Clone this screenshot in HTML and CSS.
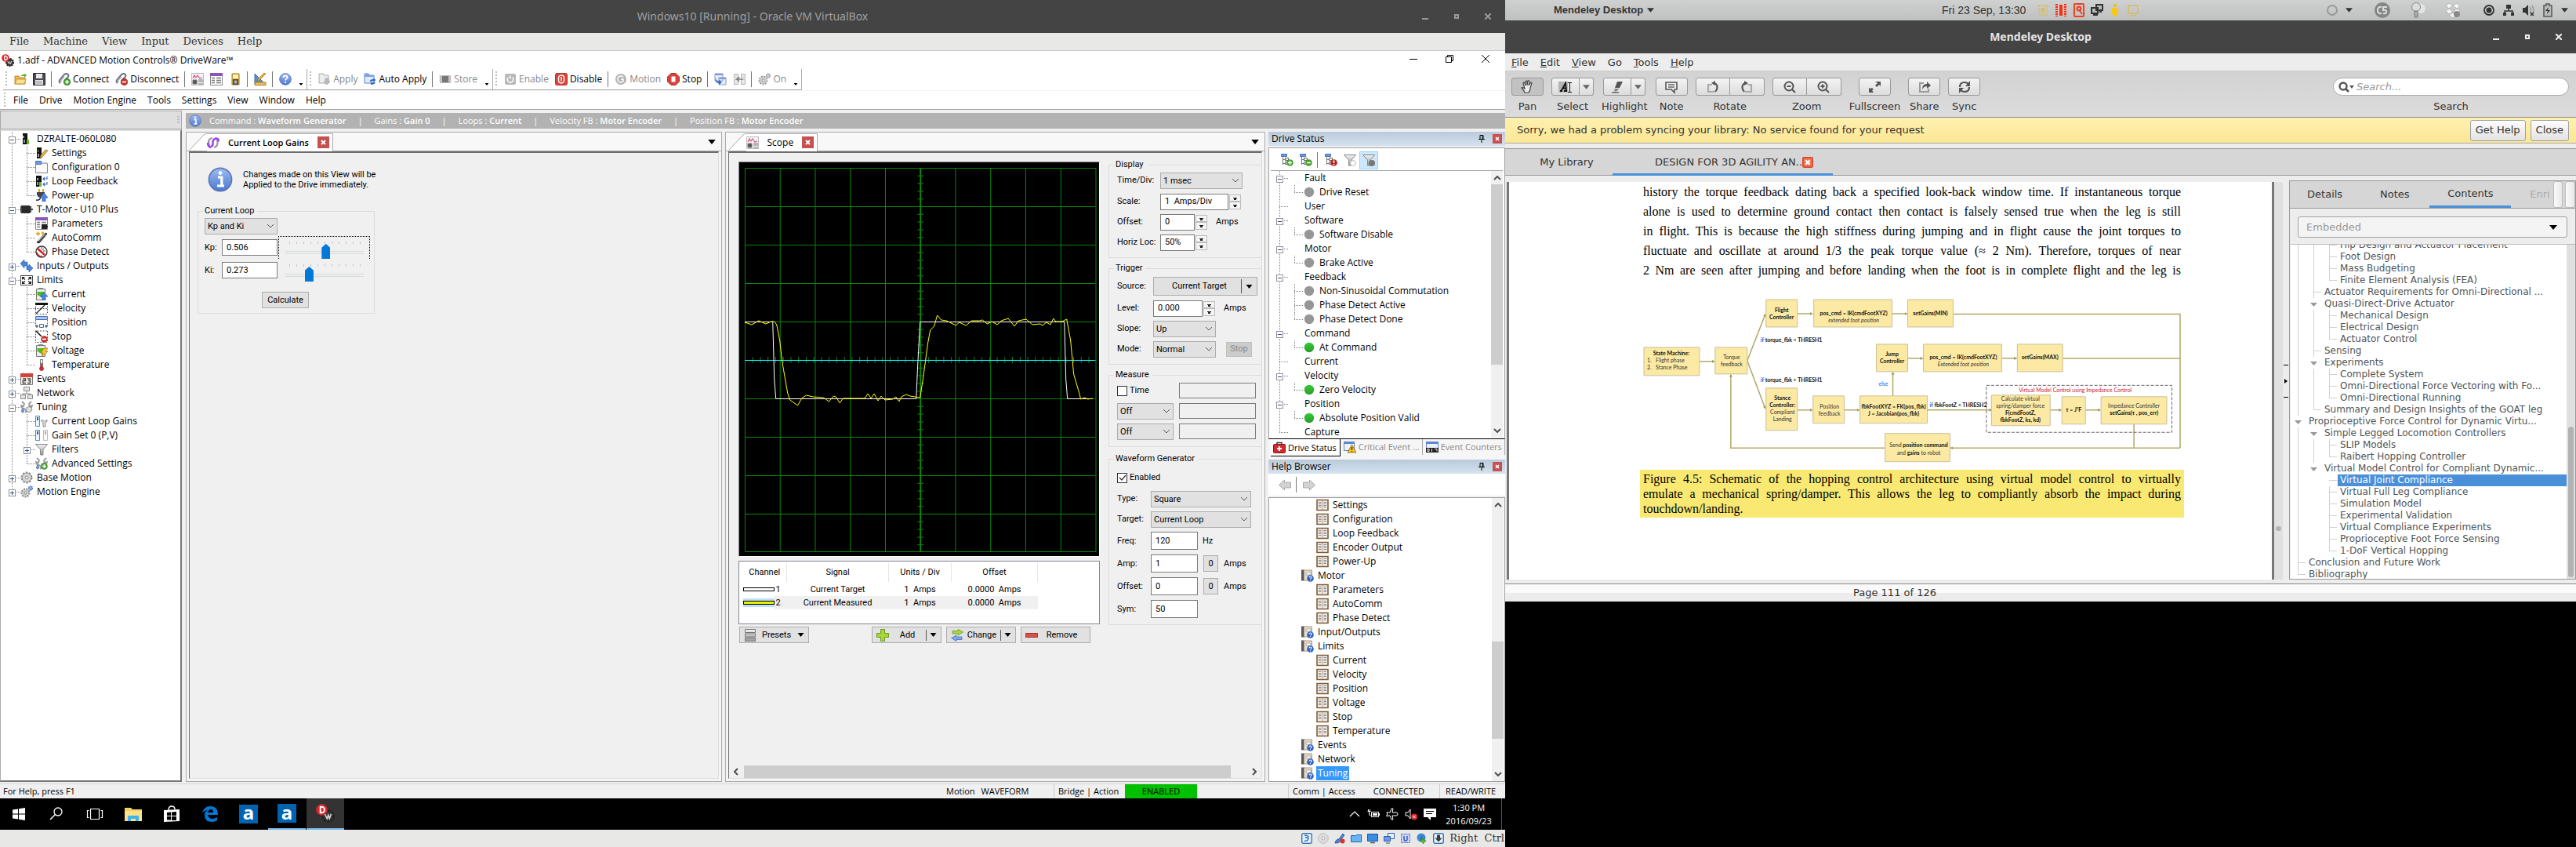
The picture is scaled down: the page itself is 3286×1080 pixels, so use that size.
FILE: index.html
```html
<!DOCTYPE html>
<html lang="en">
<head>
<meta charset="utf-8">
<title>Desktop</title>
<link rel="stylesheet" href="styles.css">
</head>
<body>
<svg class="defs" aria-hidden="true">
<defs>
<linearGradient id="gb" x1="0" y1="0" x2="0" y2="1"><stop offset="0" stop-color="#9dbcf0"/><stop offset="1" stop-color="#4a78d0"/></linearGradient>
<linearGradient id="gn" x1="0" y1="0" x2="0" y2="1"><stop offset="0" stop-color="#34cc34"/><stop offset="1" stop-color="#2c9a2c"/></linearGradient>
<linearGradient id="gg" x1="0" y1="0" x2="0" y2="1"><stop offset="0" stop-color="#f4f4f4"/><stop offset="1" stop-color="#9a9a9a"/></linearGradient>
<symbol id="open" viewBox="0 0 16 16"><path d="M1 4h5l1 2h7v8H1z" fill="#f0b94a" stroke="#b98a2d"/><path d="M3 8h12l-2 6H1z" fill="#fbe08f" stroke="#c89532"/><path d="M8 4q4-3 6-2l-1-2 3 3-3 3v-2q-3 0-5 0z" fill="#5fa834"/></symbol>
<symbol id="save" viewBox="0 0 16 16"><path d="M.5.5h15v15h-15z" fill="#4c4c50" stroke="#2b2b2e"/><path d="M4 1h8v6H4zM3 9h10v6H3z" fill="#e8e8ec"/><path d="M4 11h8M4 13h8" stroke="#999"/></symbol>
<symbol id="link" viewBox="0 0 16 16"><path d="M3 13q-3-2 0-5l5-6q3-2 5 0 1 2-1 4l-4 4" fill="none" stroke="#6c7480" stroke-width="2"/><path d="M4 12q-1-2 1-4l3-3" fill="none" stroke="#b0b6c0" stroke-width="1.5"/></symbol>
<symbol id="connect" viewBox="0 0 16 16"><use href="#link"/><circle cx="11.500" cy="11.500" r="4.300" fill="#43a02b" stroke="#2a6e1a" stroke-width=".6"/><path d="M11.500 9v5M9 11.500h5" stroke="#fff" stroke-width="1.600"/></symbol>
<symbol id="disconnect" viewBox="0 0 16 16"><use href="#link"/><circle cx="11.500" cy="11.500" r="4.300" fill="#c9302c" stroke="#8a1c1a" stroke-width=".6"/><path d="M9 11.500h5" stroke="#fff" stroke-width="1.800"/></symbol>
<symbol id="scope" viewBox="0 0 16 16"><path d="M.5.5h15v15h-15z" fill="#f4f4f8" stroke="#bbb"/><path d="M2 7l2-4 2 3 2-3 3 4 3-1" fill="none" stroke="#e0507a" stroke-width="1.200"/><path d="M2 9h5v5H2zM9 9h6M9 11h6M9 14h6" fill="#555" stroke="#777"/></symbol>
<symbol id="list" viewBox="0 0 16 16"><path d="M.5.5h15v15h-15z" fill="#fff" stroke="#888"/><path d="M0 0h16v4H0z" fill="#8a55b8"/><path d="M2 6.500h4M2 9.500h4M2 12.500h4M8 6.500h6M8 9.500h6M8 12.500h6" stroke="#777" stroke-width="1.400"/></symbol>
<symbol id="meter" viewBox="0 0 16 16"><path d="M4 1h9v14H4z" fill="#e8b640" stroke="#a07820"/><path d="M5 2h7v5H5z" fill="#fff3c4"/><path d="M5 8h7v7H5z" fill="#4a4a4a"/><circle cx="8.500" cy="11.500" r="2.200" fill="#aaa"/></symbol>
<symbol id="ruler" viewBox="0 0 16 16"><path d="M1 1l13 13H1z" fill="#5f8ed0" stroke="#3c68a8"/><path d="M1 12h14v3.500H1z" fill="#f0c05a" stroke="#a87a20"/><path d="M15 1l-9 9-2 1 1-3 8-8z" fill="#f5b838" stroke="#8a6a20" stroke-width=".8"/></symbol>
<symbol id="help" viewBox="0 0 16 16"><circle cx="8" cy="8" r="7.300" fill="url(#gb)" stroke="#5a76b8"/><path d="M5.500 6q.2-2.500 2.500-2.500t2.500 2.200q0 1.300-1.500 2-1 .6-1 1.800M8 11v2" fill="none" stroke="#fff" stroke-width="1.800"/></symbol>
<symbol id="info" viewBox="0 0 16 16"><circle cx="8" cy="8" r="7.300" fill="url(#gb)" stroke="#5a76b8" stroke-width=".8"/><path d="M6.500 6.500h2.400v5M6 12h4.500" fill="none" stroke="#fff" stroke-width="1.600"/><circle cx="8" cy="3.800" r="1.200" fill="#fff"/></symbol>
<symbol id="apply" viewBox="0 0 16 16"><path d="M1 1h5l1 2h6v10H1z" fill="#eee" stroke="#aaa"/><path d="M9 7h4v4h2l-4 4-4-4h2z" fill="#bbb" stroke="#999" stroke-width=".6"/></symbol>
<symbol id="autoapply" viewBox="0 0 16 16"><path d="M1 1h5l1 2h6v10H1z" fill="#dfe9fa" stroke="#5b84cc"/><path d="M1 1h5l1 2h6v2H1z" fill="#7ea4e4"/><path d="M7.500 11q1-3 4-3h1V6.500l3 2.500-3 2.500V10q-2 0-2.500 1zM15 12q-1 3-4 2.500v1.500l-2.500-2.500L11 11v1.500z" fill="#2d68d0"/></symbol>
<symbol id="store" viewBox="0 0 16 16"><path d="M1 3h14v10H1z" fill="#bbb"/><path d="M4 4h8v8H4z" fill="#777"/><path d="M0 4h4M0 7h4M0 10h4M12 4h4M12 7h4M12 10h4" stroke="#ccc"/></symbol>
<symbol id="enable" viewBox="0 0 16 16"><rect x="1" y="1" width="14" height="14" rx="2" fill="#b8b8b8"/><path d="M5.500 5.500a3.800 3.800 0 1 0 5 0M8 3.500v4" fill="none" stroke="#fff" stroke-width="1.500"/></symbol>
<symbol id="disable" viewBox="0 0 16 16"><rect x=".5" y=".5" width="15" height="15" rx="2" fill="#d8443c" stroke="#a8322c"/><path d="M8 5v5.500" stroke="#fff" stroke-width="1.500"/><rect x="4.500" y="3" width="7" height="10" rx="3.400" fill="none" stroke="#fff" stroke-width="1.400"/></symbol>
<symbol id="motion" viewBox="0 0 16 16"><circle cx="8" cy="8" r="7" fill="#b4b4b4"/><path d="M11 5.500a4 4 0 1 0 0 5V8H8" fill="none" stroke="#fff" stroke-width="1.500"/></symbol>
<symbol id="stop" viewBox="0 0 16 16"><path d="M5 .5h6L15.500 5v6L11 15.500H5L.5 11V5z" fill="#d8443c" stroke="#b03028"/><path d="M5.500 4.500h5v7h-5z" fill="#fff"/></symbol>
<symbol id="copywin" viewBox="0 0 16 16"><path d="M1 1h10v9H1zM6 6h9v9H6z" fill="#e8eefa" stroke="#8a9ac0"/><path d="M6 6h9v2H6zM1 1h10v2H1z" fill="#7a9ad8"/><path d="M2 6q0 5 4 5V9l4 3-4 3v-2q-6 0-4-7z" fill="#2b62c8"/></symbol>
<symbol id="merge" viewBox="0 0 16 16"><path d="M1.500 1.500h5v5h-5zM1.500 8.500h5v6h-5zM10.500 1.500h5v5h-5zM10.500 8.500h5v6h-5z" fill="#e8e8e8" stroke="#b4b4b4"/><path d="M12 8H6M8 5L5 8l3 3" fill="none" stroke="#777" stroke-width="1.500"/></symbol>
<symbol id="gear" viewBox="0 0 16 16"><circle cx="8" cy="8" r="6.200" fill="#ccc" stroke="#888" stroke-width="2.400" stroke-dasharray="2.400 1.500"/><circle cx="8" cy="8" r="5.600" fill="#d8d8d8" stroke="#999" stroke-width=".7"/><circle cx="8" cy="8" r="2" fill="#fff" stroke="#888"/></symbol>
<symbol id="gears" viewBox="0 0 16 16"><circle cx="6.500" cy="9.500" r="5" fill="#d4d4d4" stroke="#999" stroke-width="2" stroke-dasharray="2 1.400"/><circle cx="6.500" cy="9.500" r="1.600" fill="#fff" stroke="#888"/><circle cx="13" cy="3.500" r="2.500" fill="#ccc" stroke="#999" stroke-width="1.400" stroke-dasharray="1.300 .8"/></symbol>
<symbol id="gearsblue" viewBox="0 0 16 16"><circle cx="6.500" cy="9.500" r="5" fill="#d4d4d4" stroke="#888" stroke-width="2" stroke-dasharray="2 1.400"/><circle cx="6.500" cy="9.500" r="1.600" fill="#fff" stroke="#777"/><circle cx="13" cy="3.500" r="2.500" fill="#8ab0f0" stroke="#5078c0" stroke-width="1.400" stroke-dasharray="1.300 .8"/></symbol>
<symbol id="dw" viewBox="0 0 16 16"><circle cx="10.500" cy="10.500" r="4.500" fill="#3a3a3a" stroke="#222" stroke-width="2" stroke-dasharray="2 1"/><path d="M7.500 8.500l2 4 1-3 1 3 1.500-4" fill="none" stroke="#ddd"/><circle cx="5" cy="5" r="4.800" fill="#e0262c"/><path d="M3.800 2.500v5q3.500.3 3.500-2.500t-3.500-2.500z" fill="none" stroke="#fff" stroke-width="1.300"/></symbol>
<symbol id="drive" viewBox="0 0 16 16"><path d="M3 1h6v14H3z" fill="#111"/><path d="M3 4h2v3H3zM4 9h2v4H4z" fill="#999"/><path d="M8 9h3v6H8z" fill="#62b52e"/></symbol>
<symbol id="driveset" viewBox="0 0 16 16"><path d="M2 1h6v14H2z" fill="#111"/><path d="M3 4h1v3H3zM3 9h2v4H3z" fill="#999"/><path d="M16 5l-7 8-3 2 1-4 6-7z" fill="#e8b048" stroke="#8a6420" stroke-width=".7"/></symbol>
<symbol id="config" viewBox="0 0 16 16"><path d="M.5 3.500h15v12H.5z" fill="#fafafa" stroke="#888"/><path d="M.5.500h7v4h-7z" fill="#6d9ae0" stroke="#4a72b8"/><path d="M8 1.500h7v2H8z" fill="#ccd6e8"/></symbol>
<symbol id="loopfb" viewBox="0 0 16 16"><path d="M1 1h7v14H1z" fill="#111"/><path d="M2 4h2v3H2zM2 9h2v4H2z" fill="#999"/><path d="M5 9h3v6H5z" fill="#62b52e"/><path d="M15 2v3h-5M12 3l-2 2 2 2M15 9v3h-5M12 10l-2 2 2 2" fill="none" stroke="#3a6cc8" stroke-width="1.200"/></symbol>
<symbol id="plug" viewBox="0 0 16 16"><path d="M4 0h2v4H4zM9 0h2v4H9z" fill="#e0a820"/><path d="M2 4h10v3q-1 4-5 4T2 7z" fill="#444"/><path d="M7 10q-1 5-6 4" fill="none" stroke="#333" stroke-width="1.500"/><path d="M11 5l5 6h-3v5H9v-5H6z" fill="#4a86e0" stroke="#244f9c" stroke-width=".7"/></symbol>
<symbol id="motor" viewBox="0 0 16 16"><path d="M1 3h11v10H1z" fill="#2b2b2b"/><path d="M0 4h2v8H0zM12 4h2v8h-2zM14 7h2v2h-2z" fill="#444"/></symbol>
<symbol id="params" viewBox="0 0 16 16"><use href="#list"/><path d="M8 9h7v6H8zM15 11h1v2h-1z" fill="#222"/></symbol>
<symbol id="wand" viewBox="0 0 16 16"><path d="M2 14L13 2l2 1L5 15z" fill="#555" stroke="#222"/><path d="M4 12l9-9" stroke="#ccc"/><path d="M1 3h5M3.500.500v5M8 2h3M9.500.500v4" stroke="#e8a820" stroke-width="2"/></symbol>
<symbol id="gauge" viewBox="0 0 16 16"><circle cx="8" cy="8" r="7" fill="#fff" stroke="#333" stroke-width="1.400"/><path d="M3 4l9 8" stroke="#d02020" stroke-width="2.400"/><path d="M8 2v3M13 7h-3M11 4L9 6" stroke="#444"/><path d="M2 9q2 5 7 5" stroke="#d02020" stroke-width="1.500" fill="none"/></symbol>
<symbol id="io" viewBox="0 0 16 16"><path d="M0 5l5-5v3h4v5H5v3z" fill="#4a86dc" stroke="#2a58a8" stroke-width=".6"/><path d="M16 11l-5 5v-3H8V8h3V6z" fill="#4a86dc" stroke="#2a58a8" stroke-width=".6"/></symbol>
<symbol id="limits" viewBox="0 0 16 16"><path d="M.5 2.500h15v12H.5z" fill="#fff" stroke="#444"/><path d="M2 4h4L2 8zM14 4h-4l4 4zM2 13h4L2 9zM14 13h-4l4-4z" fill="#222"/><path d="M3 5l3 2.500M13 5l-3 2.500M3 12l3-2.500M13 12l-3-2.500" stroke="#222" stroke-width="1.300"/></symbol>
<symbol id="batt" viewBox="0 0 16 16"><path d="M4 0h6v2H4z" fill="#888"/><path d="M1.500 1.500h11v14h-11z" fill="#ececec" stroke="#777"/><path d="M2.500 5h9v9l-9-5z" fill="#49c01c"/></symbol>
<symbol id="curr" viewBox="0 0 16 16"><use href="#batt"/><path d="M11 6l5 5h-3v5H9v-5H6z" fill="#4a86e0" stroke="#244f9c" stroke-width=".7"/></symbol>
<symbol id="volt" viewBox="0 0 16 16"><use href="#batt"/><path d="M11 5h5l-3 4h3l-8 7 2-5H7z" fill="#ffc430" stroke="#a06a10" stroke-width=".7"/></symbol>
<symbol id="velo" viewBox="0 0 16 16"><path d="M.5 1v14M15.500 1v14M0 15.500h16M0 8.500h16" stroke="#444" stroke-dasharray="1 1"/><path d="M0 1h16v3H0z" fill="#111"/><path d="M1 15L12 4" stroke="#222" stroke-width="1.200"/></symbol>
<symbol id="posi" viewBox="0 0 16 16"><path d="M.5.500h15v4H.5z" fill="#a8c4f4" stroke="#4a6eb0"/><path d="M.5 5v8M15.500 5v8" stroke="#555" stroke-dasharray="1 1"/><path d="M5.500 10.500h5v4h-5z" fill="#e8f0fc" stroke="#667"/><path d="M0 13h4M2 11v4M12 13h4M14 11v4" stroke="#246"/></symbol>
<symbol id="stoplim" viewBox="0 0 16 16"><path d="M.5 1v14M15.500 1v14M0 1h16M0 15.500h16" stroke="#444" stroke-dasharray="1 1"/><path d="M1 1l7 7" stroke="#111" stroke-width="1.500"/><circle cx="11.500" cy="11.500" r="4.300" fill="#c9302c"/><path d="M9 11.500h5" stroke="#fff" stroke-width="1.800"/></symbol>
<symbol id="temp" viewBox="0 0 16 16"><path d="M6.500 1.500h3v9h-3z" fill="#f4f4f4" stroke="#777"/><path d="M7.200 6h1.600v6H7.200z" fill="#d02020"/><circle cx="8" cy="13" r="2.500" fill="#e02828" stroke="#8a1818" stroke-width=".7"/></symbol>
<symbol id="cal" viewBox="0 0 16 16"><path d="M.5 1.500h15v14H.5z" fill="#f4f2ee" stroke="#777"/><path d="M0 1h16v5H0z" fill="#d8403c"/><path d="M3.500 0v3M12.500 0v3" stroke="#888"/><path d="M3 8h3.500v2.500H3.200V13.500H7M9 8h3.500v5.500H9M10 10.700h2.500" fill="none" stroke="#444" stroke-width="1.300"/></symbol>
<symbol id="net" viewBox="0 0 16 16"><path d="M8 5v4M3 11V9h10v2" fill="none" stroke="#888"/><path d="M4.500.500h7v5h-7zM.5 10.500h6v5h-6zM9.500 10.500h6v5h-6z" fill="#e4e4e4" stroke="#888"/></symbol>
<symbol id="tune" viewBox="0 0 16 16"><path d="M2 1l3 3-1 3-3-1 1 3 3 1 4 4M14 1l-3 3 1 3 3-1-1 3-3 1-5 5" fill="none" stroke="#999" stroke-width="1.800"/><circle cx="11" cy="11" r="3.500" fill="#e4e4e4" stroke="#888" stroke-width="1.500" stroke-dasharray="2 1"/><path d="M3 10q-3 4 0 5 3-1 0-5z" fill="#7aa4e8" stroke="#4a72b8"/></symbol>
<symbol id="tuneadd" viewBox="0 0 16 16"><use href="#tune"/><circle cx="11.500" cy="11.500" r="4.300" fill="#43a02b"/><path d="M11.500 9v5M9 11.500h5" stroke="#fff" stroke-width="1.600"/></symbol>
<symbol id="gain" viewBox="0 0 16 16"><path d="M.5 1.500h5v13h-5z" fill="#eaf6ff" stroke="#3f8fc8"/><path d="M2 3h2v4H2z" fill="#3458b0"/><path d="M8 6q-1 3 2 4v5h3v-5q3-1 2-4l-2 2h-2z" fill="#ddd" stroke="#888" stroke-width=".9"/></symbol>
<symbol id="gainset" viewBox="0 0 16 16"><path d="M.5 1.500h5v13h-5z" fill="#eaf6ff" stroke="#3f8fc8"/><path d="M2 3h2v4H2z" fill="#3458b0"/><path d="M10.500 1.500h5v13h-5z" fill="#fafafa" stroke="#bbb"/><path d="M12 3h2v4h-2z" fill="#aaa"/></symbol>
<symbol id="filter" viewBox="0 0 16 16"><path d="M.5 1.500h15L10 8v7H6.500V8z" fill="url(#gg)" stroke="#888"/></symbol>
<symbol id="loop" viewBox="0 0 16 16"><path d="M3 12Q0 3 7 2M9 14q6-1 4-10" fill="none" stroke="#999" stroke-width="2.200"/><path d="M5 13q3-1 2.500-5T11 2.500q4 0 4 4M1 8q0 5 4 6" fill="none" stroke="#9a40f0" stroke-width="2.400"/></symbol>
<symbol id="led" viewBox="0 0 16 16"><circle cx="8" cy="8" r="6.200" fill="#969696"/></symbol>
<symbol id="ledon" viewBox="0 0 16 16"><circle cx="8" cy="8" r="6.200" fill="url(#gn)"/></symbol>
<symbol id="tre" viewBox="0 0 16 16"><path d="M.5.500h7v3h-7z" fill="#6d9ae0" stroke="#4a72b8"/><path d="M2.500 4v10M2.500 7.500h3M2.500 12.500h3" stroke="#777" fill="none"/><path d="M5.500 5.500h4v3h-4zM5.500 10.500h4v3h-4z" fill="#eee" stroke="#666"/></symbol>
<symbol id="treadd" viewBox="0 0 16 16"><use href="#tre"/><circle cx="11.500" cy="11.500" r="4.300" fill="#43a02b"/><path d="M11.500 9v5M9 11.500h5" stroke="#fff" stroke-width="1.600"/></symbol>
<symbol id="tredel" viewBox="0 0 16 16"><use href="#tre"/><circle cx="11.500" cy="11.500" r="4.300" fill="#43a02b"/><path d="M9 11.500h5" stroke="#fff" stroke-width="1.600"/></symbol>
<symbol id="treerr" viewBox="0 0 16 16"><use href="#tre"/><circle cx="11.500" cy="11.500" r="4.300" fill="#b8201c"/><path d="M11.500 8.500v3.500M11.500 13v1.500" stroke="#fff" stroke-width="1.700"/></symbol>
<symbol id="filtoff" viewBox="0 0 16 16"><use href="#filter"/><circle cx="12" cy="12" r="3.500" fill="#fff" stroke="#bbb"/></symbol>
<symbol id="filton" viewBox="0 0 16 16"><use href="#filter"/><circle cx="12" cy="12" r="4" fill="#777"/></symbol>
<symbol id="book" viewBox="0 0 16 16"><path d="M1 1.500h14v13H1z" fill="#f2ece2" stroke="#7e5c3c" stroke-width="1.600"/><path d="M8 2v12" stroke="#b9a68c"/><path d="M3 4.500h3.500M3 6.500h3.500M3 8.500h3.500M3 10.500h3.500M9.500 4.500H13M9.500 6.500H13M9.500 8.500H13M9.500 10.500H13" stroke="#8a8a98"/></symbol>
<symbol id="bookq" viewBox="0 0 16 16"><path d="M0 .5h4v14H0z" fill="#5a5a5a"/><path d="M3.500 1h10v13h-10z" fill="#e8dccb" stroke="#a89a86"/><path d="M6 4h6v3H6z" fill="#fff" stroke="#999" stroke-width=".8"/><circle cx="11.500" cy="11.500" r="4.300" fill="#2f62c4"/><path d="M10 10.500q.2-1.500 1.600-1.500t1.400 1.300-1.500 2M11.500 13.200v1" fill="none" stroke="#fff" stroke-width="1.100"/></symbol>
<symbol id="kit" viewBox="0 0 16 16"><path d="M5 4V1.500h6V4" fill="none" stroke="#333" stroke-width="1.500"/><rect x=".5" y="3.500" width="15" height="11" rx="1" fill="#d02c30" stroke="#8a1a1c"/><path d="M8 6v6M5 9h6" stroke="#fff" stroke-width="2"/></symbol>
<symbol id="calwarn" viewBox="0 0 16 16"><path d="M.5 1.500h13v11H.5z" fill="#eef3fb" stroke="#6a86b8"/><path d="M0 1h14v3H0z" fill="#5a88d4"/><path d="M10.500 5l5.500 10H5z" fill="#ffc820" stroke="#6a4a00" stroke-width=".7"/><path d="M10.500 8v4M10.500 13v1" stroke="#222" stroke-width="1.300"/></symbol>
<symbol id="calcnt" viewBox="0 0 16 16"><path d="M.5 1.500h15v9H.5z" fill="#eef3fb" stroke="#6a86b8"/><path d="M0 1h16v3H0z" fill="#5a88d4"/><path d="M0 9h16v6H0z" fill="#222"/><path d="M2 10.500h2v3H2zM7.500 10v4M11 10.500h3v3" fill="none" stroke="#eee"/></symbol>
<symbol id="pin" viewBox="0 0 8 10"><path d="M2 .5h4v5H2zM5 1v4M0 5.500h8M4 6v4" fill="none" stroke="#000"/></symbol>
<symbol id="x" viewBox="0 0 12 12"><path d="M4 4l4 4M8 4l-4 4" stroke="#fff" stroke-width="1.600"/></symbol>
<symbol id="caret" viewBox="0 0 8 5"><path d="M0 0h8L4 5z" fill="currentColor"/></symbol>
<symbol id="up" viewBox="0 0 10 6"><path d="M1 5l4-4 4 4" fill="none" stroke="#505050" stroke-width="2"/></symbol>
<symbol id="down" viewBox="0 0 10 6"><path d="M1 1l4 4 4-4" fill="none" stroke="#505050" stroke-width="2"/></symbol>
<symbol id="slant" viewBox="0 0 24 23"><path d="M2 23L20 3q1-2 4-2v22z" fill="#fff"/><path d="M2 22L20 3q1-1 4-2" fill="none" stroke="#aaa"/></symbol>
<symbol id="back" viewBox="0 0 16 14"><path d="M.5 7l7-6.500v3h8v7h-8v3z" fill="#d2d2d2" stroke="#aaa"/></symbol>
<symbol id="fwd" viewBox="0 0 16 14"><path d="M15.500 7l-7-6.500v3h-8v7h8v3z" fill="#d2d2d2" stroke="#aaa"/></symbol>
<symbol id="presets" viewBox="0 0 16 16"><path d="M1.500.500h13v4h-13zM1.500 6h13v4h-13zM1.500 11.500h13v4h-13z" fill="url(#gg)" stroke="#777"/></symbol>
<symbol id="plus" viewBox="0 0 16 16"><path d="M5.500.500h5v5h5v5h-5v5h-5v-5h-5v-5h5z" fill="#a6d63c" stroke="#6a9a1c"/></symbol>
<symbol id="swap" viewBox="0 0 16 16"><path d="M2 2.500h7V.5L15.500 4 9 8V6H2z" fill="#a6d63c" stroke="#6a9a1c" stroke-width=".8"/><path d="M14 10H7V8L.5 11.500 7 15.500v-2h7z" fill="#7aa8e8" stroke="#4a72b8" stroke-width=".8"/></symbol>
<symbol id="minus" viewBox="0 0 16 16"><path d="M.5 5.500h15v5H.5z" fill="#d8504c" stroke="#a03030"/></symbol>
<symbol id="floppy" viewBox="0 0 14 14"><rect x=".7" y=".7" width="12.600" height="12.600" rx="2" fill="#e6f0fb" stroke="#2a6cb4" stroke-width="1.300"/></symbol>
</defs>
</svg>

<section class="vm">
<header class="vm-title"><span class="spring"></span><h1>Windows10 [Running] - Oracle VM VirtualBox</h1>
<div class="winbtns"><button aria-label="Minimize"><svg viewBox="0 0 8 8"><path d="M0 7h8" stroke="#999" stroke-width="2"/></svg></button><button aria-label="Maximize"><svg viewBox="0 0 8 8"><path d="M2 2h4v4H2z" fill="none" stroke="#999" stroke-width="2"/></svg></button><button aria-label="Close"><svg viewBox="0 0 8 8"><path d="M0 0l8 8M8 0L0 8" stroke="#999" stroke-width="2"/></svg></button></div></header>
<nav class="vm-menu"><a href="#">File</a><a href="#">Machine</a><a href="#">View</a><a href="#">Input</a><a href="#">Devices</a><a href="#">Help</a></nav>

<div class="app">
<header class="app-title"><svg class="i"><use href="#dw"/></svg><span>1.adf - ADVANCED Motion Controls® DriveWare™</span>
<div class="winbtns dark"><button aria-label="Minimize"><svg viewBox="0 0 10 10"><path d="M0 5.500h10" stroke="#000"/></svg></button><button aria-label="Restore"><svg viewBox="0 0 10 10"><path d="M.5 2.500h7v7h-7zM2.500 2.500v-2h7v7h-2" fill="none" stroke="#000"/></svg></button><button aria-label="Close"><svg viewBox="0 0 10 10"><path d="M0 0l10 10M10 0L0 10" stroke="#000"/></svg></button></div></header>
<div class="toolbars">
<div class="tb"><i class="grip"></i><button aria-label="Open"><svg class="i"><use href="#open"/></svg></button><button aria-label="Save"><svg class="i"><use href="#save"/></svg></button><i class="sep"></i><button><svg class="i"><use href="#connect"/></svg>Connect</button><button><svg class="i"><use href="#disconnect"/></svg>Disconnect</button><i class="sep"></i><button aria-label="Scope"><svg class="i"><use href="#scope"/></svg></button><button aria-label="List"><svg class="i"><use href="#list"/></svg></button><button aria-label="Multimeter"><svg class="i"><use href="#meter"/></svg></button><i class="sep"></i><button aria-label="Units"><svg class="i"><use href="#ruler"/></svg></button><i class="sep"></i><button aria-label="Help"><svg class="i"><use href="#help"/></svg></button><svg class="more"><use href="#caret"/></svg></div>
<div class="tb"><i class="grip"></i><button disabled><svg class="i"><use href="#apply"/></svg>Apply</button><button><svg class="i"><use href="#autoapply"/></svg>Auto Apply</button><i class="sep"></i><button disabled><svg class="i"><use href="#store"/></svg>Store</button><svg class="more"><use href="#caret"/></svg></div>
<div class="tb"><i class="grip"></i><button disabled><svg class="i"><use href="#enable"/></svg>Enable</button><button><svg class="i"><use href="#disable"/></svg>Disable</button><i class="sep"></i><button disabled><svg class="i"><use href="#motion"/></svg>Motion</button><button><svg class="i"><use href="#stop"/></svg>Stop</button><i class="sep"></i><button aria-label="Copy"><svg class="i"><use href="#copywin"/></svg></button><button aria-label="Merge"><svg class="i"><use href="#merge"/></svg></button><i class="sep"></i><button disabled><svg class="i"><use href="#gears"/></svg>On</button><svg class="more"><use href="#caret"/></svg></div>
</div>
<nav class="app-menu"><i class="grip"></i><a href="#">File</a><a href="#">Drive</a><a href="#">Motion Engine</a><a href="#">Tools</a><a href="#">Settings</a><a href="#">View</a><a href="#">Window</a><a href="#">Help</a></nav>

<div class="work">
<aside class="side"><div class="side-head"><i></i></div>
<ul class="tree">
<li><div class="row"><b class="ex"></b><svg class="i"><use href="#drive"/></svg>DZRALTE-060L080</div><ul>
<li><div class="row"><svg class="i"><use href="#driveset"/></svg>Settings</div></li>
<li><div class="row"><svg class="i"><use href="#config"/></svg>Configuration 0</div></li>
<li><div class="row"><svg class="i"><use href="#loopfb"/></svg>Loop Feedback</div></li>
<li><div class="row"><svg class="i"><use href="#plug"/></svg>Power-up</div></li></ul></li>
<li><div class="row"><b class="ex"></b><svg class="i"><use href="#motor"/></svg>T-Motor - U10 Plus</div><ul>
<li><div class="row"><svg class="i"><use href="#params"/></svg>Parameters</div></li>
<li><div class="row"><svg class="i"><use href="#wand"/></svg>AutoComm</div></li>
<li><div class="row"><svg class="i"><use href="#gauge"/></svg>Phase Detect</div></li></ul></li>
<li><div class="row"><b class="ex plus"></b><svg class="i"><use href="#io"/></svg>Inputs / Outputs</div></li>
<li><div class="row"><b class="ex"></b><svg class="i"><use href="#limits"/></svg>Limits</div><ul>
<li><div class="row"><svg class="i"><use href="#curr"/></svg>Current</div></li>
<li><div class="row"><svg class="i"><use href="#velo"/></svg>Velocity</div></li>
<li><div class="row"><svg class="i"><use href="#posi"/></svg>Position</div></li>
<li><div class="row"><svg class="i"><use href="#stoplim"/></svg>Stop</div></li>
<li><div class="row"><svg class="i"><use href="#volt"/></svg>Voltage</div></li>
<li><div class="row"><svg class="i"><use href="#temp"/></svg>Temperature</div></li></ul></li>
<li><div class="row"><b class="ex plus"></b><svg class="i"><use href="#cal"/></svg>Events</div></li>
<li><div class="row"><b class="ex plus"></b><svg class="i"><use href="#net"/></svg>Network</div></li>
<li><div class="row"><b class="ex"></b><svg class="i"><use href="#tune"/></svg>Tuning</div><ul>
<li><div class="row"><svg class="i"><use href="#gain"/></svg>Current Loop Gains</div></li>
<li><div class="row"><svg class="i"><use href="#gainset"/></svg>Gain Set 0 (P,V)</div></li>
<li><div class="row"><b class="ex plus"></b><svg class="i"><use href="#filter"/></svg>Filters</div></li>
<li><div class="row"><svg class="i"><use href="#tuneadd"/></svg>Advanced Settings</div></li></ul></li>
<li><div class="row"><b class="ex plus"></b><svg class="i"><use href="#gear"/></svg>Base Motion</div></li>
<li><div class="row"><b class="ex plus"></b><svg class="i"><use href="#gearsblue"/></svg>Motion Engine</div></li>
</ul></aside>

<main class="center">
<div class="infobar"><svg class="i"><use href="#info"/></svg><span>Command : <b>Waveform Generator</b></span><i>|</i><span>Gains : <b>Gain 0</b></span><i>|</i><span>Loops : <b>Current</b></span><i>|</i><span>Velocity FB : <b>Motor Encoder</b></span><i>|</i><span>Position FB : <b>Motor Encoder</b></span></div>
<div class="panels">
<section class="panel">
<div class="tabstrip"><svg class="slant"><use href="#slant"/></svg><div class="tab"><svg class="i"><use href="#loop"/></svg><span class="bold">Current Loop Gains</span><button class="xbtn" aria-label="Close tab"><svg><use href="#x"/></svg></button></div><svg class="pcaret"><use href="#caret"/></svg></div>
<div class="pbody gains">
<div class="note"><svg><use href="#info"/></svg><p>Changes made on this View will be<br>Applied to the Drive immediately.</p></div>
<fieldset class="loopset"><legend>Current Loop</legend>
<select class="w93" aria-label="Gain mode"><option>Kp and Ki</option></select>
<div class="krow"><label for="kp">Kp:</label><input id="kp" class="w71" value="0.506"><div class="slide focus"><input type="range" aria-label="Kp gain" min="0" max="100" value="52"></div></div>
<div class="krow"><label for="ki">Ki:</label><input id="ki" class="w71" value="0.273"><div class="slide"><input type="range" aria-label="Ki gain" min="0" max="100" value="28"></div></div>
<button class="btn calc">Calculate</button>
</fieldset>
</div></section>

<section class="panel wide-panel">
<div class="tabstrip"><svg class="slant"><use href="#slant"/></svg><div class="tab"><svg class="i"><use href="#scope"/></svg><span>Scope</span><button class="xbtn" aria-label="Close tab"><svg><use href="#x"/></svg></button></div><svg class="pcaret"><use href="#caret"/></svg></div>
<div class="pbody scope">
<div class="scope-main">
<div class="scope-left">
<svg class="screen" viewBox="0 0 462 502" preserveAspectRatio="none">
<path fill="#000" d="M0 0h462v502H0z"/>
<g transform="translate(7 7)" fill="none">
<path stroke="#0a870a" d="M.5 .5h450v489H.5zM45.500 0v490M90.500 0v490M135.500 0v490M180.500 0v490M270.500 0v490M315.500 0v490M360.500 0v490M405.500 0v490M0 49.500h450M0 98.500h450M0 147.500h450M0 196.500h450M0 294.500h450M0 343.500h450M0 392.500h450M0 441.500h450"/>
<path stroke="#0a870a" stroke-width="2" d="M225.500 0v490"/>
<path stroke="#0a870a" stroke-width="8" stroke-dasharray="1 8.800" d="M225.500 0v490M0 245h450"/>
<path stroke="#0ff" stroke-width="1" d="M0 245.500h450"/>
<path stroke="#fff" d="M0 196.500h36L38 270 40 294.500H220L222 250 225 196.500H410L412 270 414 294.500H446"/>
<path stroke="#ff0" d="M0 197L9 200L18 195L27 199L34 196L38 196L41 200L45 220L48 247L55 287L58 296L68 303L73 294L79 290L88 292L101 293L108 298L114 291L117 292L122 300L126 294L143 294L154 294L158 288L162 294L166 288L171 297L175 291L180 296L190 295L194 292L198 298L201 292L207 289L212 291L225 293L229 267L235 223L238 207L243 202L247 188L252 194L259 195L271 201L275 197L284 201L291 195L301 195L305 194L311 199L317 196L324 200L329 195L338 192L346 202L351 195L361 193L369 200L379 199L382 201L387 197L392 200L396 192L399 196L407 196L413 193L418 220L422 263L429 287L431 295L436 293L440 295L446 294"/>
</g></svg>
<div class="chan"><table><thead><tr><th class="c1">Channel</th><th class="c2">Signal</th><th class="c3">Units / Div</th><th class="c4">Offset</th></tr></thead>
<tbody><tr><td><span class="ch"><i class="swatch"></i>1</span></td><td>Current Target</td><td>1&nbsp; Amps</td><td>0.0000&nbsp; Amps</td></tr><tr class="sel"><td><span class="ch"><i class="swatch yel"></i>2</span></td><td>Current Measured</td><td>1&nbsp; Amps</td><td>0.0000&nbsp; Amps</td></tr></tbody></table></div>
<div class="acts"><button class="btn"><svg class="i"><use href="#presets"/></svg><span>Presets</span><svg class="c"><use href="#caret"/></svg></button><span class="spring"></span><button class="btn split"><svg class="i"><use href="#plus"/></svg><span>Add</span><svg class="c"><use href="#caret"/></svg></button><button class="btn split"><svg class="i"><use href="#swap"/></svg><span>Change</span><svg class="c"><use href="#caret"/></svg></button><button class="btn"><svg class="i"><use href="#minus"/></svg><span>Remove</span></button></div>
</div>
<div class="scope-right">
<fieldset class="display"><legend>Display</legend>
<div class="f"><label for="td">Time/Div:</label><select id="td" class="w105"><option>1 msec</option></select></div>
<div class="f"><label for="sc">Scale:</label><input id="sc" class="w87" value="1  Amps/Div"><span class="spin"><button aria-label="Up"></button><button aria-label="Down"></button></span></div>
<div class="f"><label for="of">Offset:</label><input id="of" class="w44" value="0"><span class="spin"><button aria-label="Up"></button><button aria-label="Down"></button></span><span class="unit">Amps</span></div>
<div class="f"><label for="hl">Horiz Loc:</label><input id="hl" class="w44" value="50%"><span class="spin"><button aria-label="Up"></button><button aria-label="Down"></button></span></div></fieldset>
<fieldset class="trigger"><legend>Trigger</legend>
<div class="f"><label for="src">Source:</label><button id="src" class="btn srcbtn"><span>Current Target</span><svg class="c"><use href="#caret"/></svg></button></div>
<div class="f"><label for="lv">Level:</label><input id="lv" class="w63" value="0.000"><span class="spin"><button aria-label="Up"></button><button aria-label="Down"></button></span><span class="unit">Amps</span></div>
<div class="f"><label for="sl">Slope:</label><select id="sl" class="w80"><option>Up</option></select></div>
<div class="f"><label for="mo">Mode:</label><select id="mo" class="w80"><option>Normal</option></select><button class="btn stopbtn" disabled>Stop</button></div></fieldset>
<fieldset class="measure"><legend>Measure</legend>
<div class="f"><label class="chk"><input type="checkbox">Time</label><input class="ro" aria-label="Time value" readonly></div>
<div class="f"><select class="w72" aria-label="Measure 1"><option>Off</option></select><input class="ro" aria-label="Measure 1 value" readonly></div>
<div class="f"><select class="w72" aria-label="Measure 2"><option>Off</option></select><input class="ro" aria-label="Measure 2 value" readonly></div></fieldset>
<fieldset class="wave"><legend>Waveform Generator</legend>
<div class="f"><label class="chk"><input type="checkbox" checked>Enabled</label></div>
<div class="f"><label for="ty">Type:</label><select id="ty" class="w128"><option>Square</option></select></div>
<div class="f"><label for="ta">Target:</label><select id="ta" class="w128"><option>Current Loop</option></select></div>
<div class="f tall"><label for="fr">Freq:</label><input id="fr" class="w60" value="120"><span class="hz">Hz</span></div>
<div class="f tall"><label for="am">Amp:</label><input id="am" class="w60" value="1"><button class="btn zero">0</button><span class="amps">Amps</span></div>
<div class="f tall"><label for="wo">Offset:</label><input id="wo" class="w60" value="0"><button class="btn zero">0</button><span class="amps">Amps</span></div>
<div class="f tall"><label for="sy">Sym:</label><input id="sy" class="w60" value="50"></div></fieldset>
</div></div>
<div class="hscroll"><svg viewBox="0 0 6 10"><path d="M5 1L1 5l4 4" fill="none" stroke="#505050" stroke-width="2"/></svg><i></i><svg viewBox="0 0 6 10"><path d="M1 1l4 4-4 4" fill="none" stroke="#505050" stroke-width="2"/></svg></div>
</div></section>

<aside class="dock">
<div class="dhead"><h2>Drive Status</h2><svg class="pin"><use href="#pin"/></svg><button class="xbtn" aria-label="Close"><svg><use href="#x"/></svg></button></div>
<div class="dbox status">
<div class="dtools"><button aria-label="Expand"><svg class="i"><use href="#treadd"/></svg></button><button aria-label="Collapse"><svg class="i"><use href="#tredel"/></svg></button><i class="sep"></i><button aria-label="Errors"><svg class="i"><use href="#treerr"/></svg></button><button aria-label="Filter off"><svg class="i"><use href="#filtoff"/></svg></button><button class="on" aria-label="Filter on"><svg class="i"><use href="#filton"/></svg></button></div>
<div class="scroller"><ul class="tree">
<li><div class="row"><b class="ex"></b><i class="i"></i>Fault</div><ul><li><div class="row"><svg class="i"><use href="#led"/></svg>Drive Reset</div></li></ul></li>
<li><div class="row"><i class="i"></i>User</div></li>
<li><div class="row"><b class="ex"></b><i class="i"></i>Software</div><ul><li><div class="row"><svg class="i"><use href="#led"/></svg>Software Disable</div></li></ul></li>
<li><div class="row"><b class="ex"></b><i class="i"></i>Motor</div><ul><li><div class="row"><svg class="i"><use href="#led"/></svg>Brake Active</div></li></ul></li>
<li><div class="row"><b class="ex"></b><i class="i"></i>Feedback</div><ul><li><div class="row"><svg class="i"><use href="#led"/></svg>Non-Sinusoidal Commutation</div></li><li><div class="row"><svg class="i"><use href="#led"/></svg>Phase Detect Active</div></li><li><div class="row"><svg class="i"><use href="#led"/></svg>Phase Detect Done</div></li></ul></li>
<li><div class="row"><b class="ex"></b><i class="i"></i>Command</div><ul><li><div class="row"><svg class="i"><use href="#ledon"/></svg>At Command</div></li></ul></li>
<li><div class="row"><i class="i"></i>Current</div></li>
<li><div class="row"><b class="ex"></b><i class="i"></i>Velocity</div><ul><li><div class="row"><svg class="i"><use href="#ledon"/></svg>Zero Velocity</div></li></ul></li>
<li><div class="row"><b class="ex"></b><i class="i"></i>Position</div><ul><li><div class="row"><svg class="i"><use href="#ledon"/></svg>Absolute Position Valid</div></li></ul></li>
<li><div class="row"><i class="i"></i>Capture</div></li></ul>
<div class="vscroll"><svg><use href="#up"/></svg><i></i><svg><use href="#down"/></svg></div></div>
</div>
<div class="dtabs"><button class="act"><svg class="i"><use href="#kit"/></svg>Drive Status</button><button><svg class="i"><use href="#calwarn"/></svg>Critical Event ...</button><button><svg class="i"><use href="#calcnt"/></svg>Event Counters</button></div>
<div class="dhead"><h2>Help Browser</h2><svg class="pin"><use href="#pin"/></svg><button class="xbtn" aria-label="Close"><svg><use href="#x"/></svg></button></div>
<div class="htools"><button aria-label="Back"><svg><use href="#back"/></svg></button><i class="sep"></i><button aria-label="Forward"><svg><use href="#fwd"/></svg></button></div>
<div class="dbox helpbox"><ul class="tree plain"><li><ul>
<li><div class="row"><svg class="i"><use href="#book"/></svg>Settings</div></li><li><div class="row"><svg class="i"><use href="#book"/></svg>Configuration</div></li><li><div class="row"><svg class="i"><use href="#book"/></svg>Loop Feedback</div></li><li><div class="row"><svg class="i"><use href="#book"/></svg>Encoder Output</div></li><li><div class="row"><svg class="i"><use href="#book"/></svg>Power-Up</div></li></ul></li>
<li><div class="row"><svg class="i"><use href="#bookq"/></svg>Motor</div><ul>
<li><div class="row"><svg class="i"><use href="#book"/></svg>Parameters</div></li><li><div class="row"><svg class="i"><use href="#book"/></svg>AutoComm</div></li><li><div class="row"><svg class="i"><use href="#book"/></svg>Phase Detect</div></li></ul></li>
<li><div class="row"><svg class="i"><use href="#bookq"/></svg>Input/Outputs</div></li>
<li><div class="row"><svg class="i"><use href="#bookq"/></svg>Limits</div><ul>
<li><div class="row"><svg class="i"><use href="#book"/></svg>Current</div></li><li><div class="row"><svg class="i"><use href="#book"/></svg>Velocity</div></li><li><div class="row"><svg class="i"><use href="#book"/></svg>Position</div></li><li><div class="row"><svg class="i"><use href="#book"/></svg>Voltage</div></li><li><div class="row"><svg class="i"><use href="#book"/></svg>Stop</div></li><li><div class="row"><svg class="i"><use href="#book"/></svg>Temperature</div></li></ul></li>
<li><div class="row"><svg class="i"><use href="#bookq"/></svg>Events</div></li>
<li><div class="row"><svg class="i"><use href="#bookq"/></svg>Network</div></li>
<li><div class="row picked"><svg class="i"><use href="#bookq"/></svg><span>Tuning</span></div><ul><li><div class="row"><svg class="i"><use href="#book"/></svg></div></li></ul></li></ul>
<div class="vscroll low"><svg><use href="#up"/></svg><i></i><svg><use href="#down"/></svg></div></div>
</aside>
</div></main>
</div>
<footer class="statusbar"><span class="grow">For Help, press F1</span><span class="s-motion">Motion<em>WAVEFORM</em></span><span class="s-bridge">Bridge | Action</span><span class="s-on">ENABLED</span><span class="s-gap"></span><span class="s-comm">Comm | Access<em>CONNECTED</em></span><span class="s-rw">READ/WRITE</span></footer>
</div>

<div class="taskbar">
<button aria-label="Start"><svg viewBox="0 0 24 24"><path d="M4 6.500l7-1v6H4zM12 5.300l8-1.300v7.500h-8zM4 12.500h7v6l-7-1zM12 12.500h8V20l-8-1.300z" fill="#fff"/></svg></button>
<button aria-label="Search"><svg viewBox="0 0 24 24"><circle cx="14" cy="9" r="5" fill="none" stroke="#fff" stroke-width="1.300"/><path d="M10.500 12.500L4 19" stroke="#fff" stroke-width="1.500"/></svg></button>
<button aria-label="Task view"><svg viewBox="0 0 24 24"><path d="M6.500 5.500h11v13h-11zM4.500 7.500h-2v9h2M19.500 7.500h2v9h-2" fill="none" stroke="#fff" stroke-width="1.200"/></svg></button>
<button aria-label="Explorer"><svg viewBox="0 0 24 24"><path d="M1 4h8l2 2h12v15H1z" fill="#f5cf5f"/><path d="M1 8h22v13H1z" fill="#fce08a"/><path d="M5 21v-7h14v7h-4v-3H9v3z" fill="#3eb4e8"/></svg></button>
<button aria-label="Store"><svg viewBox="0 0 24 24"><path d="M2 7l20-1v15L2 22z" fill="#fff"/><path d="M8 7q0-5 4-5t4 4" fill="none" stroke="#fff" stroke-width="1.500"/><path d="M6 10l5-.5v4.500H6zM12 9.500l6-.5v5h-6zM6 15h5v4.500H6zM12 15h6v5h-6z" fill="#000"/></svg></button>
<button aria-label="Edge"><svg viewBox="0 0 24 24"><path d="M2 11Q4 2 12 2q10 0 10 11H9q1 5 6 5 3 0 6-2v4q-3 2-7 2-9 0-9-9 0-4 4-6-4 0-7 4zM9 10h7q0-4-3-4t-4 4z" fill="#0078d7"/></svg></button>
<button class="abtn" aria-label="App one">a</button>
<button class="abtn run" aria-label="App two">a</button>
<button class="cur" aria-label="DriveWare"><svg viewBox="0 0 16 16"><use href="#dw"/></svg></button>
<span class="spring"></span>
<div class="tray"><svg viewBox="0 0 16 16"><path d="M2 11l6-6 6 6" fill="none" stroke="#fff" stroke-width="1.200"/></svg><svg viewBox="0 0 16 16"><path d="M5.500 5.500h9v6h-9zM15.500 7v3M.5 4.500h4M1.500 2v2M3.500 2v2M2.500 5v3q0 2 2 2" fill="none" stroke="#fff"/><path d="M7 7h6v3H7z" fill="#fff"/></svg><svg viewBox="0 0 16 16"><path d="M1 6h4L7 1h2l-1 5h5q2 0 2 2t-2 2H8l1 5H7L5 10H3l-2 1V9l1-1-1-1z" fill="none" stroke="#fff"/></svg><svg viewBox="0 0 16 16"><path d="M1 6h3l3-4v12l-3-4H1z" fill="none" stroke="#fff"/><circle cx="12" cy="11.500" r="4" fill="#e0222c"/><path d="M10.300 9.800l3.400 3.400M13.700 9.800l-3.400 3.400" stroke="#fff"/></svg><svg viewBox="0 0 16 16"><path d="M0 1h16v11H9v4l-4-4H0z" fill="#fff"/><path d="M3 4.500h10M3 7.500h8" stroke="#000"/></svg></div>
<div class="clock">1:30 PM<br>2016/09/23</div><i class="peek"></i>
</div>
<footer class="vm-status">
<svg><use href="#floppy"/><path d="M4 3q6 0 5 4t-4 3l-1 1M5 6h3" fill="none" stroke="#2a6cb4" stroke-width="1.300"/></svg>
<svg viewBox="0 0 14 14"><circle cx="7" cy="7" r="6.300" fill="#ddd" stroke="#bbb"/><circle cx="7" cy="7" r="2" fill="#fff" stroke="#aaa"/></svg>
<svg viewBox="0 0 14 14"><path d="M1 13q1-5 5-5l5-7 2 2-5 6q0 4-7 4z" fill="#4a86dc" stroke="#245a9c"/><circle cx="10.500" cy="10.500" r="3" fill="#e03028"/></svg>
<svg viewBox="0 0 14 14"><path d="M.5 3.500h6l1-1h6v9H.5z" fill="#6cb4f4" stroke="#1a68b0"/></svg>
<svg viewBox="0 0 14 14"><path d="M.5 1.500h13v9H.5z" fill="#3a8ee0" stroke="#1a58a0"/><path d="M4 12.500h6" stroke="#556" stroke-width="1.500"/></svg>
<svg viewBox="0 0 14 14"><path d="M5.500.500h8v7h-8z" fill="#eee" stroke="#2a5cb0"/><path d="M.5 4.500h8v6h-8z" fill="#6a96e4" stroke="#2a5cb0"/><path d="M3 13h5" stroke="#445"/></svg>
<svg viewBox="0 0 14 14"><path d="M1.500 1.500h11v11h-11z" fill="#c8d4fa" stroke="#4a62c8" stroke-dasharray="2 1"/><path d="M5 4v4q0 2 2 2t2-2V4" fill="none" stroke="#3450b8" stroke-width="1.400"/></svg>
<svg viewBox="0 0 14 14"><circle cx="6" cy="6" r="5.500" fill="#3a8ad8"/><path d="M7 4q-3 3 0 5v-2l5 3-4 4v-2q-5-2-1-8z" fill="#62b52e" stroke="#2a6e1a" stroke-width=".6"/></svg>
<svg><use href="#floppy"/><path d="M5 2.500h4v4h2.500L7 11.500 2.500 6.500H5z" fill="#3a3a3a"/></svg>
<span>Right&nbsp; Ctrl</span>
</footer>
</section>

<section class="host">
<header class="gnome"><span class="g-app">Mendeley Desktop <svg class="c"><use href="#caret"/></svg></span><span class="g-clock">Fri 23 Sep, 13:30</span>
<div class="g-mid">
<svg viewBox="0 0 16 18"><path d="M3 3h10v12H3z" fill="none" stroke="#d6bc62" stroke-width="1.500" stroke-dasharray="2 1"/><path d="M6 6h4v6H6z" fill="#d6bc62"/></svg>
<svg viewBox="0 0 16 18"><path d="M6 2h4v14H6z" fill="#f83010"/><path d="M2.500 1v16M13.500 1v16" stroke="#f83010" stroke-width="3" stroke-dasharray="2 1"/></svg>
<svg viewBox="0 0 16 18"><rect x="2" y="1" width="12" height="16" rx="1" fill="none" stroke="#f04020" stroke-width="2"/><circle cx="8" cy="7" r="3.500" fill="#f04020"/><circle cx="8" cy="7" r="1.200" fill="#ccc"/><path d="M9 10l3 4" stroke="#f04020" stroke-width="2"/></svg>
<svg viewBox="0 0 16 18"><path d="M7 2h8v7H7zM1 6h8v7H1zM3 15h6M11 11h3" fill="#bbb" stroke="#333" stroke-width="2"/></svg>
<svg viewBox="0 0 16 18"><path d="M6 1h4v4H6z" fill="#e8c030"/><path d="M4 6h8v6q-1 5-4 5t-4-5z" fill="#f8c818"/></svg>
<svg viewBox="0 0 16 18"><path d="M2 3h12v10H2zM4 16h8" fill="none" stroke="#d6bc62" stroke-width="1.600"/></svg></div>
<div class="g-right">
<svg viewBox="0 0 16 18"><circle cx="8" cy="9" r="6" fill="none" stroke="#999" stroke-width="2"/></svg><svg class="c"><use href="#caret"/></svg>
<svg class="big first" viewBox="0 0 22 22"><circle cx="11" cy="11" r="10" fill="#858585"/><path d="M10 7q-5-1-5 4t5 4M17 7h-5v4q5-1 4 3-1 2-4 1" fill="none" stroke="#ddd" stroke-width="2"/></svg>
<svg class="big" viewBox="0 0 22 22"><circle cx="15" cy="9" r="6" fill="#e4e4e4"/><circle cx="9" cy="7" r="5.500" fill="#ddd" stroke="#888"/><path d="M7 12h4v8H7z" fill="#aaa" stroke="#777"/></svg>
<svg class="big last" viewBox="0 0 22 22"><path d="M6 2l5 3-5 4-4-3zM16 2l4 4-4 3-5-4zM2 12l4-3 5 4-5 3zM20 12l-4-3-5 4 5 3zM6 17l5-3 5 3-5 4z" fill="#f4f4f4" stroke="#aaa" stroke-width=".8"/><circle cx="16" cy="16" r="4" fill="#888"/></svg>
<svg viewBox="0 0 16 18"><circle cx="8" cy="9" r="6" fill="none" stroke="#333" stroke-width="1.800"/><circle cx="8" cy="9" r="3.500" fill="#333"/></svg>
<svg viewBox="0 0 16 18"><path d="M5 2h6v5H5zM1 12h4v4H1zM11 12h4v4h-4z" fill="#333"/><path d="M8 7v3M3 12v-2h10v2" fill="none" stroke="#333" stroke-width="1.500"/></svg>
<svg viewBox="0 0 16 18"><path d="M1 6h3l4-4v14l-4-4H1z" fill="#333"/><path d="M10 5q3 4 0 8M13 3q3 5 1 9" fill="none" stroke="#999" stroke-width="1.500"/><path d="M11 12l4 4M15 12l-4 4" stroke="#333" stroke-width="1.500"/></svg>
<svg viewBox="0 0 16 18"><path d="M6 1h4v2h3v14H3V3h3z" fill="#bbb" stroke="#555" stroke-width="1.500"/><path d="M9 5l-4 5h3l-1 4 4-5H8z" fill="#333"/></svg>
<svg class="c"><use href="#caret"/></svg></div></header>
<header class="m-title"><span class="spring"></span><h1>Mendeley Desktop</h1><div class="winbtns"><button aria-label="Minimize"><svg viewBox="0 0 8 8"><path d="M0 7h8" stroke="#eee" stroke-width="2"/></svg></button><button aria-label="Maximize"><svg viewBox="0 0 8 8"><path d="M2 2h4v4H2z" fill="none" stroke="#eee" stroke-width="2"/></svg></button><button aria-label="Close"><svg viewBox="0 0 8 8"><path d="M0 0l8 8M8 0L0 8" stroke="#eee" stroke-width="2"/></svg></button></div></header>
<nav class="m-menu"><a href="#"><u>F</u>ile</a><a href="#"><u>E</u>dit</a><a href="#"><u>V</u>iew</a><a href="#">Go</a><a href="#"><u>T</u>ools</a><a href="#"><u>H</u>elp</a></nav>
<div class="m-tools">
<div class="g"><div class="seg"><button class="w39 down" aria-label="Pan"><svg viewBox="0 0 18 18"><path d="M5 16q-1-3-4-6 1-1 4 1L3 4q1-2 2 0l1 3V2q1-2 2 0v5l1-6q1-1 2 1l-1 5 3-4q1 0 1 1l-2 6q0 4-2 6z" fill="#eee" stroke="#444" stroke-width="1.200"/></svg></button></div><span>Pan</span></div>
<div class="g"><div class="seg"><button class="w34" aria-label="Select"><svg viewBox="0 0 18 18"><path d="M0 2h12v14H0z" fill="#b4b4b4"/><path d="M2 14h3M7 14h4M3.500 14L9 4l1 10M5.500 10.500H10" fill="none" stroke="#111" stroke-width="1.800"/><path d="M12 3.500h5M12 15.500h5M14.500 3.500v12" stroke="#111"/></svg></button><button class="w18" aria-label="Select menu"><svg class="c"><use href="#caret"/></svg></button></div><span>Select</span></div>
<div class="g"><div class="seg"><button class="w34" aria-label="Highlight"><svg viewBox="0 0 18 18"><path d="M9 2h7l-4 8H6z" fill="#555"/><path d="M5.500 11h6l-3 3-3 1z" fill="#888"/><path d="M2 16h9" stroke="#666" stroke-width="1.500"/></svg></button><button class="w18" aria-label="Highlight menu"><svg class="c"><use href="#caret"/></svg></button></div><span>Highlight</span></div>
<div class="g"><div class="seg"><button class="w39" aria-label="Note"><svg viewBox="0 0 18 18"><path d="M2 3h14v9h-3v4l-4-4H2z" fill="#eee" stroke="#555" stroke-width="1.600"/><path d="M5 6h8M5 9h8" stroke="#666" stroke-width="1.300"/></svg></button></div><span>Note</span></div>
<div class="g"><div class="seg"><button class="w43" aria-label="Rotate left"><svg viewBox="0 0 18 18"><path d="M8 6H3v9h8" fill="none" stroke="#aaa" stroke-width="2.200"/><path d="M10 4q6 1 4 8l-2 3" fill="none" stroke="#555" stroke-width="2.200"/><path d="M12 1v6L7 4z" fill="#555"/></svg></button><button class="w43" aria-label="Rotate right"><svg viewBox="0 0 18 18"><path d="M10 6h5v9H7" fill="none" stroke="#aaa" stroke-width="2.200"/><path d="M8 4Q2 5 4 12l2 3" fill="none" stroke="#555" stroke-width="2.200"/><path d="M6 1v6l5-3z" fill="#555"/></svg></button></div><span>Rotate</span></div>
<div class="g"><div class="seg"><button class="w43" aria-label="Zoom out"><svg viewBox="0 0 18 18"><circle cx="8" cy="8" r="5.500" fill="none" stroke="#555" stroke-width="2"/><path d="M5.500 8h5M12 12l4 4" stroke="#555" stroke-width="2"/></svg></button><button class="w43" aria-label="Zoom in"><svg viewBox="0 0 18 18"><circle cx="8" cy="8" r="5.500" fill="none" stroke="#555" stroke-width="2"/><path d="M5.500 8h5M8 5.500v5M12 12l4 4" stroke="#555" stroke-width="2"/></svg></button></div><span>Zoom</span></div>
<div class="g"><div class="seg"><button class="w39" aria-label="Fullscreen"><svg viewBox="0 0 18 18"><path d="M10 2h7v6l-2-2-3 3-2-2 3-3zM2 10l2 1 2-1 2 2-2 1 2 3H2z" fill="#555"/></svg></button></div><span>Fullscreen</span></div>
<div class="g"><div class="seg"><button class="w39" aria-label="Share"><svg viewBox="0 0 18 18"><path d="M8 4H3v11h11v-4" fill="none" stroke="#999" stroke-width="2"/><path d="M6 12q0-7 6-7V2l5 5-5 4V8q-4 0-6 4z" fill="#555"/></svg></button></div><span>Share</span></div>
<div class="g"><div class="seg"><button class="w39" aria-label="Sync"><svg viewBox="0 0 18 18"><path d="M3 9q0-6 6-6 3 0 5 2M15 9q0 6-6 6-3 0-5-2" fill="none" stroke="#555" stroke-width="2.200"/><path d="M16 1v7h-6zM2 17v-7h6z" fill="#555"/></svg></button></div><span>Sync</span></div>
<span class="spring"></span>
<div class="g srch"><div class="sbox"><svg viewBox="0 0 20 16"><circle cx="6" cy="7" r="4.500" fill="none" stroke="#555" stroke-width="2.400"/><path d="M9 10l4 4" stroke="#555" stroke-width="2.600"/><path d="M14 6h6l-3 4z" fill="#555"/></svg><input id="q" placeholder="Search..."></div><label for="q">Search</label></div>
</div>
<div class="warn"><span>Sorry, we had a problem syncing your library: No service found for your request</span><button>Get Help</button><button>Close</button></div>
<div class="m-tabs"><button class="lib">My Library</button><button class="doc">DESIGN FOR 3D AGILITY AN..<svg viewBox="0 0 13 13"><rect width="13" height="13" rx="2" fill="#d8452c"/><path d="M1.500 1.500h10v10h-10z" fill="#ec7850"/><path d="M4 4l5 5M9 4l-5 5" stroke="#fff" stroke-width="2"/></svg></button></div>
<div class="m-body">
<article class="page">
<p class="ln">history the torque feedback dating back a specified look-back window time. If instantaneous torque</p>
<p class="ln">alone is used to determine ground contact then contact is falsely sensed true when the leg is still</p>
<p class="ln">in flight. This is because the high stiffness during jumping and in flight cause the joint torques to</p>
<p class="ln">fluctuate and oscillate at around 1/3 the peak torque value (≈ 2 Nm). Therefore, torques of near</p>
<p class="ln">2 Nm are seen after jumping and before landing when the foot is in complete flight and the leg is</p>
<svg class="fig" viewBox="2094 378 694 214" role="img" aria-label="Hopping control architecture">
<defs><marker id="ah" viewBox="0 0 4 4" refX="3" refY="2" markerWidth="4" markerHeight="4" orient="auto" markerUnits="userSpaceOnUse"><path d="M0 0l4 2-4 2z" fill="#a39a5c"/></marker></defs>
<g fill="none" stroke="#b3a868" stroke-width="1.500">
<path marker-end="url(#ah)" d="M2168 461h19"/><path marker-end="url(#ah)" d="M2229 460l23-59"/><path marker-end="url(#ah)" d="M2229 460l23 61"/><path marker-end="url(#ah)" d="M2293 400h19"/><path marker-end="url(#ah)" d="M2414 400h19"/><path d="M2492 400.500h290v171"/><path marker-end="url(#ah)" d="M2782 571.500h-293"/><path d="M2632 457h150M2723 541v30"/><path marker-end="url(#ah)" d="M2405 571.500h-197V478"/><path marker-end="url(#ah)" d="M2434 457h19"/><path marker-end="url(#ah)" d="M2554 457h19"/><path marker-end="url(#ah)" d="M2293 523h19"/><path marker-end="url(#ah)" d="M2353 523h19"/><path marker-end="url(#ah)" d="M2459 523h82"/><path marker-end="url(#ah)" d="M2415 505v-30"/><path marker-end="url(#ah)" d="M2616 523h14"/><path marker-end="url(#ah)" d="M2661 523h19"/></g>
<path d="M2534.500 491.500h237v60h-237z" fill="none" stroke="#666" stroke-dasharray="4 2"/>
<g fill="#fce9a3" stroke="#c9c09a"><path d="M2097 443h71v36h-71zM2188 443h41v34h-41zM2253 382h40v35h-40zM2314 382h100v35h-100zM2434 382h58v35h-58zM2394 439h40v35h-40zM2454 439h100v35h-100zM2574 439h58v35h-58zM2253 495h40v54h-40zM2313 505h40v35h-40zM2373 505h86v35h-86zM2541 504h75v39h-75zM2631 506h30v35h-30zM2681 506h84v35h-84zM2405 553h83v36h-83z"/></g>
<g class="dt">
<text class="b" x="2132" y="453">State Machine:</text><text x="2101" y="462" class="s">1.&#160;&#160; Flight phase</text><text x="2101" y="471" class="s">2.&#160;&#160; Stance Phase</text>
<text x="2209" y="458">Torque</text><text x="2209" y="467">feedback</text>
<text class="b" x="2273" y="398">Flight</text><text class="b" x="2273" y="407">Controller</text>
<text class="b" x="2365" y="402">pos_cmd = IK(cmdFootXYZ)</text><text class="it" x="2365" y="411">extended foot position</text>
<text class="b" x="2463" y="402">setGains(MIN)</text>
<text class="b s" x="2246" y="436"><tspan class="bl">if</tspan> torque_fbk &lt; THRESH1</text><text class="b s" x="2246" y="487"><tspan class="bl">if</tspan> torque_fbk &gt; THRESH1</text>
<text class="b" x="2414" y="454">Jump</text><text class="b" x="2414" y="463">Controller</text>
<text class="b" x="2505" y="458">pos_cmd = IK(cmdFootXYZ)</text><text class="it" x="2505" y="467">Extended foot position</text><text class="b" x="2603" y="458">setGains(MAX)</text>
<text class="b" x="2274" y="510">Stance</text><text class="b" x="2274" y="519">Controller:</text><text x="2274" y="528">Compliant</text><text x="2274" y="537">Landing</text>
<text x="2334" y="521">Position</text><text x="2334" y="530">feedback</text>
<text class="b" x="2416" y="521">fbkFootXYZ = FK(pos_fbk)</text><text class="b" x="2416" y="530">J = Jacobian(pos_fbk)</text>
<text class="bl" x="2403" y="492">else</text><text class="b s" x="2462" y="519"><tspan class="bl">if</tspan> fbkFootZ &lt; THRESH2</text>
<text class="rd" x="2648" y="500">Virtual Model Control using Impedance Control</text>
<text x="2578" y="511">Calculate virtual</text><text x="2578" y="520">spring/damper force</text><text class="b" x="2578" y="529">F(cmdFootZ,</text><text class="b" x="2578" y="538">fbkFootZ, ks, kd)</text>
<text class="b" x="2646" y="525">τ = JᵀF</text><text x="2723" y="520">Impedance Controller</text><text class="b" x="2723" y="529">setGains(τ , pos_err)</text>
<text x="2448" y="570">Send <tspan class="b">position command</tspan></text><text x="2448" y="580">and <tspan class="b">gains</tspan> to robot</text></g></svg>
<div class="cap"><p class="ln">Figure 4.5: Schematic of the hopping control architecture using virtual model control to virtually</p><p class="ln">emulate a mechanical spring/damper. This allows the leg to compliantly absorb the impact during</p><p>touchdown/landing.</p></div>
</article>
<div class="pscroll"><i></i></div>
<div class="splitter"><svg viewBox="0 0 7 42"><path d="M0 .5h6M0 41.500h6" stroke="#000"/><path d="M1 18l4 3-4 3z"/></svg></div>
<aside class="m-side">
<div class="stabs"><button>Details</button><button>Notes</button><button class="act">Contents</button><button class="fade">Enri</button><span class="spring"></span><i></i><i></i></div>
<div class="selwrap"><select aria-label="Contents source"><option>Embedded</option></select></div>
<div class="toc"><ul class="mtree"><li><ul><li><ul>
<li><div>Hip Design and Actuator Placement</div></li><li><div>Foot Design</div></li><li><div>Mass Budgeting</div></li><li><div>Finite Element Analysis (FEA)</div></li></ul></li>
<li><div>Actuator Requirements for Omni-Directional ...</div></li>
<li class="o"><div>Quasi-Direct-Drive Actuator</div><ul><li><div>Mechanical Design</div></li><li><div>Electrical Design</div></li><li><div>Actuator Control</div></li></ul></li>
<li><div>Sensing</div></li>
<li class="o"><div>Experiments</div><ul><li><div>Complete System</div></li><li><div>Omni-Directional Force Vectoring with Fo...</div></li><li><div>Omni-Directional Running</div></li></ul></li>
<li><div>Summary and Design Insights of the GOAT leg</div></li></ul></li>
<li class="o"><div>Proprioceptive Force Control for Dynamic Virtu...</div><ul>
<li class="o"><div>Simple Legged Locomotion Controllers</div><ul><li><div>SLIP Models</div></li><li><div>Raibert Hopping Controller</div></li></ul></li>
<li class="o"><div>Virtual Model Control for Compliant Dynamic...</div><ul><li><div class="hit">Virtual Joint Compliance</div></li><li><div>Virtual Full Leg Compliance</div></li><li><div>Simulation Model</div></li><li><div>Experimental Validation</div></li><li><div>Virtual Compliance Experiments</div></li><li><div>Proprioceptive Foot Force Sensing</div></li><li><div>1-DoF Vertical Hopping</div></li></ul></li></ul></li>
<li><div>Conclusion and Future Work</div></li><li><div>Bibliography</div></li></ul>
<div class="tscroll"><i></i></div></div>
</aside>
</div>
<footer class="m-foot">Page 111 of 126</footer>
</section>
</body>
</html>
```
FILE: styles.css
```css
* { box-sizing: border-box; }
body { margin: 0; height: 100vh; display: flex; overflow: hidden; background: #000; color: #000; font: 12px/18px "Open Sans", "Noto Sans", sans-serif; }
h1, h2, p, ul, fieldset, legend { margin: 0; padding: 0; }
ul { list-style: none; }
a { color: inherit; text-decoration: none; }
button, input, select { font: inherit; color: inherit; margin: 0; padding: 0; border: 0; background: none; border-radius: 0; }
svg { display: block; flex: none; }
.defs { position: absolute; width: 0; height: 0; }
.i { width: 16px; height: 16px; flex: none; display: block; }
.spring { flex: 1; }
.bold { font-weight: 600; font-size: 11px; }

.vm { flex: 1920 1 0; min-width: 0; display: flex; flex-direction: column; background: #f0f0f0; }
.host { flex: 1366 1 0; min-width: 0; display: flex; flex-direction: column; }

/* virtual machine frame */
.vm-title { height: 42px; flex: none; background: #444; color: #a0a0a0; display: flex; align-items: center; }
.vm-title h1 { font: 14px/20px "Noto Sans", sans-serif; }
.winbtns { flex: 1; display: flex; justify-content: flex-end; gap: 32px; padding-right: 18px; align-items: center; }
.vm-title .spring, .m-title .spring { padding-left: 18px; }
.winbtns button { display: block; }
.winbtns svg { width: 8px; height: 8px; }
.vm-menu { height: 23px; flex: none; background: #e8e8e6; border-bottom: 1px solid #c8c8c8; display: flex; align-items: center; gap: 18px; padding-left: 12px; font: 13px/20px "DejaVu Serif", serif; color: #333; }
.app { flex: 1; min-height: 0; display: flex; flex-direction: column; }
.app-title { height: 23px; flex: none; background: #fff; display: flex; align-items: center; gap: 4px; padding-left: 2px; }
.winbtns.dark { gap: 36px; padding: 0 20px 4px 0; }
.winbtns.dark svg { width: 10px; height: 10px; }
.toolbars { height: 28px; flex: none; background: #fff; border-bottom: 1px solid #eef2f7; display: flex; padding-left: 4px; }
.tb { display: flex; align-items: center; gap: 2px; border-right: 1px solid #aaa; border-bottom: 1px solid #aaa; padding: 0 4px 0 3px; }
.tb button { display: flex; align-items: center; gap: 3px; padding: 0 3px; }
.tb button:disabled { color: #888; }
.grip { width: 2px; height: 20px; background: repeating-linear-gradient(#bbb 0 2px, transparent 2px 4px); margin-right: 4px; flex: none; }
.sep { width: 1px; height: 20px; background: #777; margin: 0 3px 0 2px; flex: none; }
.more { width: 6px; height: 3px; margin: 12px 0 0 4px; }
.app-menu { height: 24px; flex: none; background: #fff; border-bottom: 1px solid #a0a0a0; display: flex; align-items: center; gap: 14px; padding-left: 5px; }
.app-menu .grip { margin-right: -4px; }

/* trees */
.work { flex: 1; min-height: 0; display: flex; gap: 5px; }
.side { width: 232px; flex: none; display: flex; flex-direction: column; padding-bottom: 2px; }
.side-head { height: 24px; flex: none; margin-top: 1px; background: #dfdfdf; border: 1px solid #a8a8a8; display: flex; justify-content: flex-end; align-items: center; padding-right: 2px; }
.side-head i { width: 3px; height: 10px; background: repeating-linear-gradient(#bbb 0 1px, transparent 1px 2px); }
.side > .tree { flex: 1; overflow: hidden; background: #fff; border: 2px solid #777; border-top-color: #ddd; border-left: 1px solid #aaa; padding: 1px 0 0 10px; }
.tree li { background: repeating-linear-gradient(#808080 0 1px, transparent 1px 2px) 4px 0 / 1px 100% no-repeat; }
.tree li:last-child { background-size: 1px 9px; }
.tree ul { margin-left: 19px; }
.row { height: 18px; display: flex; align-items: center; white-space: nowrap; background: repeating-linear-gradient(90deg, #808080 0 1px, transparent 1px 2px) 4px 9px / 11px 1px no-repeat; }
.row > .i { margin: 0 5px 0 15px; }
.row > .ex + .i { margin-left: 6px; }
.ex { width: 9px; height: 9px; flex: none; border: 1px solid #919191; margin-top: 2px; background: linear-gradient(#3050a0, #3050a0) center / 5px 1px no-repeat #fff; }
.ex.plus { background: linear-gradient(#3050a0, #3050a0) center / 5px 1px no-repeat, linear-gradient(#3050a0, #3050a0) center / 1px 5px no-repeat #fff; }
.tree.plain li, .plain .row { background: none; }

/* centre panels */
.center { flex: 1; min-width: 0; display: flex; flex-direction: column; padding-top: 4px; }
.infobar { height: 20px; flex: none; background: #b2b2b2; color: #fff; display: flex; align-items: center; gap: 15px; padding-left: 4px; font-size: 11px; white-space: nowrap; }
.infobar .i { margin-right: -5px; }
.infobar i { font-style: normal; }
.infobar b { font-weight: 600; }
.panels { flex: 1; min-height: 0; display: flex; gap: 4px; padding-top: 4px; }
.panel { flex: 684 1 0; min-width: 0; margin-bottom: 2px; border: 1px solid #aaa; padding: 0 3px 3px; display: flex; flex-direction: column; background: #f5f5f5; }
.wide-panel { flex-grow: 690; }
.tabstrip { height: 24px; flex: none; display: flex; align-items: center; border-bottom: 1px solid #aaa; background: #f8f8f8; margin: 0 -3px; }
.slant { width: 24px; height: 23px; margin-left: 2px; }
.tab { height: 23px; display: flex; align-items: center; gap: 11px; margin-top: 1px; border-top: 1px solid #aaa; border-right: 1px solid #aaa; padding-right: 4px; background: #fff; }
.xbtn { width: 15px; height: 15px; background: #c75050; }
.xbtn svg { width: 15px; height: 15px; }
.pcaret { width: 10px; height: 6px; margin: 0 7px 0 auto; }
.pbody { flex: 1; min-height: 0; background: #f0f0f0; border: 1px solid #ddd; border-top: 2px solid #6d6d6d; border-left: 1px solid #6d6d6d; font-family: Roboto, "Open Sans", sans-serif; }
.gains { padding: 18px 10px; font-size: 11px; line-height: 13px; }
.note { display: flex; gap: 13px; align-items: center; padding-left: 13px; }
.note svg { width: 32px; height: 32px; }
fieldset { border: 1px solid #dcdcdc; min-width: 0; }
legend { line-height: 14px; padding: 0 4px 0 2px; margin-left: 6px; }
.loopset { width: 226px; margin-top: 17px; padding: 2px 4px 6px 8px; }
.loopset legend { margin-left: -2px; }
select { appearance: none; border: 1px solid #adadad; height: 21px; line-height: 17px; padding: 0 16px 0 3px; background: #e1e1e1 url("data:image/svg+xml,%3Csvg xmlns='http://www.w3.org/2000/svg' width='8' height='5'%3E%3Cpath d='M0 0l4 4 4-4' fill='none' stroke='%23555'/%3E%3C/svg%3E") right 4px center no-repeat; }
.pbody input:not([type]) { height: 21px; background: #fff; border: 1px solid #7a7a7a; padding: 0 4px 1px 5px; }
.w93 { width: 93px; display: block; }
.krow { display: flex; align-items: center; height: 29px; }
.krow label { width: 22px; }
.krow:nth-of-type(1) { margin-top: 2px; }
.w71 { width: 71px; }
.slide { margin-left: 1px; width: 117px; height: 29px; padding: 6px 8px 0; border: 1px solid transparent; border-bottom: 0; }
.slide.focus { border: 1px dotted #000; border-bottom: 0; }
.slide input { display: block; appearance: none; width: 100px; height: 22px; background: linear-gradient(#d6dada, #d6dada) 0 12px / 100% 1px no-repeat, linear-gradient(#d6dada, #d6dada) 0 15px / 100% 1px no-repeat, repeating-linear-gradient(90deg, #c4c4c4 0 1px, transparent 1px 9px) 5px 0 / 91px 3px no-repeat; }
.slide input::-webkit-slider-thumb { appearance: none; width: 11px; height: 19px; margin-top: 3px; background: #0078d7; clip-path: polygon(50% 0, 100% 25%, 100% 100%, 0 100%, 0 25%); }
.btn { background: #e1e1e1; border: 1px solid #adadad; height: 21px; display: flex; align-items: center; justify-content: center; }
.calc { width: 60px; margin: 13px 0 0 73px; }
.scope { display: flex; flex-direction: column; font-size: 11px; line-height: 14px; }
.scope-main { flex: 1; min-height: 0; display: flex; gap: 11px; padding: 11px 0 0 12px; overflow: hidden; }
.scope-left { flex: 1; min-width: 0; }
.screen { width: 100%; height: 504px; border: 1px solid #888; border-right-color: #fff; border-bottom-color: #fff; }
.chan { height: 81px; margin-top: 5px; background: #fff; border: 1px solid #828790; padding: 2px 0 0 5px; }
table { border-collapse: collapse; text-align: center; }
th { font-weight: 400; height: 24px; padding: 0; border-right: 1px solid #e5e5e5; }
td { padding: 0; height: 17px; line-height: 17px; white-space: pre; }
tbody::before { content: ""; display: block; height: 1px; }
.c1 { width: 56px; } .c2 { width: 130px; } .c3 { width: 80px; } .c4 { width: 110px; }
.sel { background: #f0f0f0; }
.ch { display: flex; align-items: center; gap: 2px; background: linear-gradient(90deg, #fff 40px, transparent 40px); }
.swatch { width: 40px; height: 5px; flex: none; border: 1px solid #000; background: #fff; }
.yel { background: #e8f000; box-shadow: 0 3px #bfdfff, 0 -3px #bfdfff; }
.acts { display: flex; gap: 6px; margin-top: 3px; padding: 0 12px 0 1px; }
.acts .btn { width: 89px; padding: 0 5px; }
.acts .btn span { flex: 1; }
.c { width: 9px; height: 5px; }
.split .c { margin-left: 4px; }
.split span { border-right: 1px solid #555; }
.scope-right { width: 195px; flex: none; margin-top: -3px; }
.scope-right fieldset { border-right: 0; padding: 2px 0 9px 10px; margin-bottom: 6px; display: grid; gap: 6px; }
.scope-right legend { margin-left: -4px; }
.scope-right .trigger { padding-top: 4px; }
.scope-right .measure { padding-top: 3px; margin-bottom: 8px; }
.scope-right .wave { padding: 6px 0 8px 10px; }
.f { height: 20px; display: flex; align-items: center; }
.f > label { width: 55px; flex: none; }
.display .f:nth-of-type(1), .wave .f:nth-of-type(1) { height: 22px; }
.trigger .f:nth-of-type(1) { height: 24px; }
.trigger .f > label { width: 46px; }
.wave .f > label { width: 43px; }
.wave .tall { height: 23px; }
.wave .tall input { height: 23px; }
.f .chk, .wave .f .chk { display: flex; align-items: center; gap: 3px; width: 79px; }
input[type=checkbox] { appearance: none; width: 13px; height: 13px; border: 1px solid #333; background: #fff; }
input[type=checkbox]:checked { background: url("data:image/svg+xml,%3Csvg xmlns='http://www.w3.org/2000/svg' width='11' height='11'%3E%3Cpath d='M2 5l3 3 5-6' fill='none' stroke='%23333' stroke-width='1.300'/%3E%3C/svg%3E") #fff; }
.w105 { width: 105px; } .w87 { width: 87px; } .w44 { width: 44px; } .w63 { width: 63px; } .w80 { width: 80px; } .w72 { width: 72px; } .w128 { width: 128px; } .w60 { width: 60px; }
.pbody input.ro:not([type]) { width: 98px; height: 20px; background: #f0f0f0; }
.measure select { margin-right: 7px; }
.measure .chk { flex: none; width: 79px; }
.spin { width: 15px; height: 19px; margin-left: 1px; display: grid; grid-template-rows: 1fr 1fr; }
.spin button { border: 1px solid #bbb; background: linear-gradient(#222, #222) center / 5px 1px no-repeat, linear-gradient(#222, #222) center 3px / 3px 3px no-repeat, #f4f4f4; }
.unit { margin-left: 11px; }
.srcbtn { width: 133px; height: 24px; padding: 0 5px; }
.srcbtn span { flex: 1; border-right: 1px solid #555; margin-right: 5px; line-height: 18px; }
.stopbtn { width: 33px; height: 19px; margin-left: 13px; background: #ccc; border-color: #bfbfbf; color: #888; }
.hz { margin-left: 6px; }
.zero { width: 19px; margin-left: 7px; }
.amps { margin-left: 7px; }
.hscroll { height: 16px; flex: none; display: flex; align-items: center; padding: 0 6px; gap: 7px; }
.hscroll svg { width: 6px; height: 10px; }
.hscroll i { flex: 1; height: 16px; background: #cdcdcd; margin-right: 20px; }

/* docked panes */
.dock { width: 302px; flex: none; display: flex; flex-direction: column; }
.dhead { height: 18px; flex: none; display: flex; align-items: center; gap: 10px; padding: 0 4px; background: linear-gradient(#bacada, #d5e2f0); }
.dhead h2 { font-size: 12px; font-weight: 400; flex: 1; }
.pin { width: 8px; height: 10px; }
.dhead .xbtn, .dhead .xbtn svg { width: 12px; height: 12px; }
.dbox { border: 1px solid #a0a0a0; background: #fff; overflow: hidden; }
.status { margin-top: 2px; height: 372px; flex: none; border-bottom-color: #000; padding: 2px 2px 0; }
.dtools { height: 27px; display: flex; align-items: center; padding-left: 9px; border-bottom: 1px solid #a8a8a8; }
.dtools button { width: 24px; height: 23px; display: flex; align-items: center; justify-content: center; }
.dtools .sep { margin: 0 5px 0 2px; }
.dtools .on { background: #cce8ff; border: 1px solid #99d1ff; }
.scroller { display: flex; height: 340px; }
.scroller .tree { flex: 1; padding-left: 7px; overflow: hidden; }
.vscroll { width: 15px; background: #f0f0f0; display: flex; flex-direction: column; align-items: center; padding: 6px 0; flex: none; }
.vscroll svg { width: 10px; height: 6px; }
.vscroll i { width: 15px; height: 230px; background: #cdcdcd; margin: 5px 0 auto; }
.vscroll.low i { height: 124px; margin: auto 0 42px; }
.dtabs { height: 26px; flex: none; display: flex; align-items: flex-start; padding-left: 3px; background: #f6f6f6; font-size: 11px; }
.dtabs button { display: flex; align-items: center; gap: 3px; height: 22px; padding: 0 3px 0 4px; color: #888; white-space: nowrap; }
.dtabs button + button { height: 20px; border-right: 1px solid #aaa; }
.dtabs .act { color: #000; background: #fff; border: 1px solid #000; border-top: 0; border-left: 0; padding: 0 4px 0 3px; }
.htools { height: 28px; flex: none; display: flex; align-items: center; gap: 2px; padding-left: 13px; background: #fff; }
.htools svg { width: 16px; height: 15px; }
.htools .sep { margin: 0 6px 0 4px; }
.helpbox { flex: 1; min-height: 0; display: flex; margin-top: 2px; margin-bottom: 2px; padding-right: 1px; }
.helpbox .tree { flex: 1; padding-left: 26px; overflow: hidden; }
.picked span { background: #3399ff; color: #fff; padding: 0 2px; margin-left: -2px; height: 18px; line-height: 18px; }

/* status and task bars */
.statusbar { height: 19px; flex: none; border-top: 1px solid #d8d8d8; display: flex; line-height: 18px; white-space: nowrap; font-size: 11px; }
.statusbar em { font-style: normal; }
.grow { flex: 1; padding-left: 4px; }
.s-motion { width: 137px; } .s-motion em { margin-left: 8px; }
.s-bridge { width: 91px; padding-left: 5px; border-left: 1px solid #ccc; }
.s-on { width: 92px; background: #00c000; text-align: center; }
.s-gap { width: 116px; }
.s-comm { width: 193px; padding-left: 5px; border-left: 1px solid #ccc; } .s-comm em { margin-left: 23px; }
.s-rw { width: 84px; padding-left: 7px; border-left: 1px solid #ccc; }
.taskbar { height: 40px; flex: none; background: #000; color: #fff; display: flex; padding-right: 4px; }
.taskbar > button { width: 48px; height: 40px; display: flex; align-items: center; justify-content: center; margin-right: 1px; }
.taskbar > button svg { width: 24px; height: 24px; }
.taskbar > button:first-child { margin-right: 0; }
.taskbar > .abtn { background: linear-gradient(#0063b1, #0063b1) center / 24px 24px no-repeat; color: #fff; font: bold 24px/24px "Noto Sans", sans-serif; padding-bottom: 4px; }
.taskbar > .run { border-bottom: 2px solid #76b9ed; padding-bottom: 2px; }
.taskbar > .cur { background: #333; border-bottom: 2px solid #76b9ed; margin: 0; }
.tray { display: flex; align-items: center; gap: 8px; }
.tray svg { width: 16px; height: 16px; }
.clock { width: 83px; text-align: center; line-height: 17px; padding-top: 3px; font-size: 11px; }
.peek { width: 1px; background: #555; }
.vm-status { height: 22px; flex: none; background: #e8e8e6; display: flex; align-items: center; justify-content: flex-end; gap: 7px; padding-right: 1px; font: 13px/20px "DejaVu Serif", serif; color: #333; }
.vm-status svg { width: 14px; height: 14px; }

/* host desktop */
.host { font: 13px/16px "DejaVu Sans", sans-serif; color: #333; }
.gnome { height: 26px; flex: none; background: linear-gradient(#cfd1d1, #bfc1c1); color: #333; display: flex; align-items: center; font: 14px/20px "Liberation Sans", sans-serif; }
.g-app { font-weight: 700; font-size: 13px; padding-left: 62px; display: flex; align-items: center; gap: 5px; width: 557px; }
.g-mid, .g-right { display: flex; align-items: center; }
.g-mid { gap: 7px; padding-left: 14px; flex: 1; }
.g-right { gap: 9px; padding-right: 10px; }
.g-mid svg, .g-right svg { width: 16px; height: 18px; }
.g-right svg.c, .g-app .c { width: 9px; height: 6px; }
.g-right svg.big { width: 22px; height: 22px; margin: 0 6px 0 8px; }
.g-right svg.first { margin-left: 18px; }
.g-right svg.last { margin-right: 18px; }
.m-title { height: 42px; flex: none; background: #444; color: #e4e4e4; display: flex; align-items: center; }
.m-title h1 { font: bold 14px/20px "Noto Sans", sans-serif; }
.m-menu { height: 22px; flex: none; background: #ededed; display: flex; align-items: center; gap: 15px; padding: 2px 0 0 8px; }
.m-tools { height: 60px; flex: none; background: linear-gradient(#d2d2d2, #dcdcdc); border-top: 1px solid #ccc; border-bottom: 1px solid #888; display: flex; gap: 10px; padding: 8px 9px 0 8px; }
.g { display: flex; flex-direction: column; align-items: center; gap: 6px; }
.seg { display: flex; }
.seg button { height: 23px; border: 1px solid #999; background: linear-gradient(#f4f4f4, #dcdcdc); display: flex; align-items: center; justify-content: center; }
.seg button:first-child { border-radius: 3px 0 0 3px; }
.seg button:last-child { border-radius: 0 3px 3px 0; }
.seg button + button { border-left: 0; }
.seg button:only-child { border-radius: 3px; }
.seg svg { width: 18px; height: 18px; }
.seg svg.c { width: 9px; height: 6px; color: #666; }
.seg .down { background: #c2c2c2; }
.w39 { width: 41px; } .w34 { width: 36px; } .w18 { width: 18px; } .w43 { width: 44px; }
.srch { width: 301px; }
.sbox { width: 301px; height: 23px; border: 1px solid #aaa; border-radius: 12px; background: #fff; display: flex; align-items: center; gap: 3px; padding: 0 6px; }
.sbox svg { width: 20px; height: 16px; }
.sbox input { flex: 1; outline: 0; }
.sbox input::placeholder { font-style: italic; color: #999; opacity: 1; }
.warn { height: 33px; flex: none; background: linear-gradient(#fff0b0, #fbe795); border-bottom: 1px solid #aaa; display: flex; align-items: center; gap: 6px; padding: 0 9px 0 15px; }
.warn span { flex: 1; }
.warn button { height: 27px; padding: 0 6px; border: 1px solid #a0a0a0; border-radius: 3px; background: linear-gradient(#fdfdfd, #e2e2e2); }
.m-tabs { height: 41px; flex: none; border-top: 6px solid #ededed; background: #d6d6d6; display: flex; box-shadow: inset 0 1px #999, inset 0 -1px #999; }
.lib { width: 137px; padding-left: 20px; }
.doc { width: 281px; border-bottom: 3px solid #4a90d9; display: flex; align-items: center; padding: 3px 0 0 54px; white-space: nowrap; }
.doc svg { width: 14px; height: 14px; }
.m-body { flex: none; height: 521px; background: #ededed; display: flex; min-height: 0; padding: 8px 0 5px 2px; border-bottom: 1px solid #888; }
.page { flex: 1; min-width: 0; background: #fff; border: 3px solid #777; border-width: 0 3px; padding: 0 116px 0 171px; overflow: hidden; font: 16px/25px "Liberation Serif", serif; color: #000; }
.page > .ln { line-height: 25px; }
.ln { text-align: justify; text-align-last: justify; white-space: nowrap; }
.fig { width: calc(100% + 7px); margin: 21px 0 0 -2px; }
.cap { background: #f9e973; margin: 7px -4px 0; padding: 2px 4px; line-height: 19px; }
.dt { font: 7px "Lato", sans-serif; fill: #333; text-anchor: middle; }
.dt .b { font-weight: 700; fill: #111; } .dt .s { text-anchor: start; } .dt .it { font-style: italic; } .dt .bl { fill: #2a5fe0; } .dt .rd { fill: #d02030; }
.pscroll { width: 11px; background: #e0e0e0; display: flex; align-items: flex-end; justify-content: center; padding-bottom: 62px; }
.pscroll i { width: 7px; height: 6px; border-radius: 3px; background: #b4b4b4; }
.splitter { width: 8px; display: flex; align-items: center; justify-content: flex-end; }
.splitter svg { width: 7px; height: 42px; }
.m-side { width: 366px; flex: none; margin-top: -2px; border: 1px solid #999; display: flex; flex-direction: column; }
.stabs { height: 35px; flex: none; background: #d6d6d6; border-bottom: 1px solid #999; display: flex; gap: 1px; overflow: hidden; }
.stabs button { width: 90px; padding-bottom: 1px; }
.stabs .act { width: 107px; border-bottom: 3px solid #4a90d9; padding-top: 2px; }
.stabs button:first-child { width: 92px; }
.stabs .fade { color: #aaa; width: auto; margin-left: 23px; }
.stabs i { width: 13px; border: 1px solid #bbb; border-radius: 3px; background: linear-gradient(90deg, #fafafa, #e8e8e8); margin-left: 2px; }
.selwrap { height: 45px; flex: none; padding: 10px 10px 0; }
.selwrap select { width: 100%; height: 27px; border: 1px solid #a0a0a0; border-radius: 3px; color: #999; padding-left: 10px; background: url("data:image/svg+xml,%3Csvg xmlns='http://www.w3.org/2000/svg' width='10' height='6'%3E%3Cpath d='M0 0h10L5 6z'/%3E%3C/svg%3E") right 12px center no-repeat #f4f4f4; }
.toc { flex: 1; min-height: 0; display: flex; border-top: 1px solid #bbb; background: #fff; overflow: hidden; margin-left: 1px; font-size: 12px; }
.mtree { flex: 1; min-width: 0; margin-top: -7px; padding-left: 5px; color: #505558; }
.mtree ul { margin-left: 20px; }
.mtree li { background: linear-gradient(#d0d0d0, #d0d0d0) 4px 0 / 1px 100% no-repeat; }
.mtree li:last-child { background-size: 1px 8px; }
.mtree div { line-height: 15px; height: 15px; margin-left: 4px; padding-left: 14px; white-space: nowrap; background: linear-gradient(#d0d0d0, #d0d0d0) 0 7px / 10px 1px no-repeat; }
.mtree .o > div { margin-left: 0; padding-left: 18px; background: url("data:image/svg+xml,%3Csvg xmlns='http://www.w3.org/2000/svg' width='9' height='5'%3E%3Cpath d='M0 0h9L4.500 5z' fill='%23999'/%3E%3C/svg%3E") 0 6px no-repeat #fff; }
.mtree .hit { color: #fff; background: linear-gradient(#d0d0d0, #d0d0d0) 0 7px / 11px 1px no-repeat, linear-gradient(#fff, #fff) 0 0 / 11px 15px no-repeat, #4a90d9; }
.tscroll { width: 11px; background: #e0e0e0; display: flex; align-items: flex-end; justify-content: center; padding-bottom: 2px; }
.tscroll i { width: 7px; height: 192px; border-radius: 4px; background: #b0b2b4; }
.m-foot { height: 22px; flex: none; background: linear-gradient(#fafafa 0 11px, #ececec 11px); display: flex; align-items: center; justify-content: center; padding-right: 372px; }
```
